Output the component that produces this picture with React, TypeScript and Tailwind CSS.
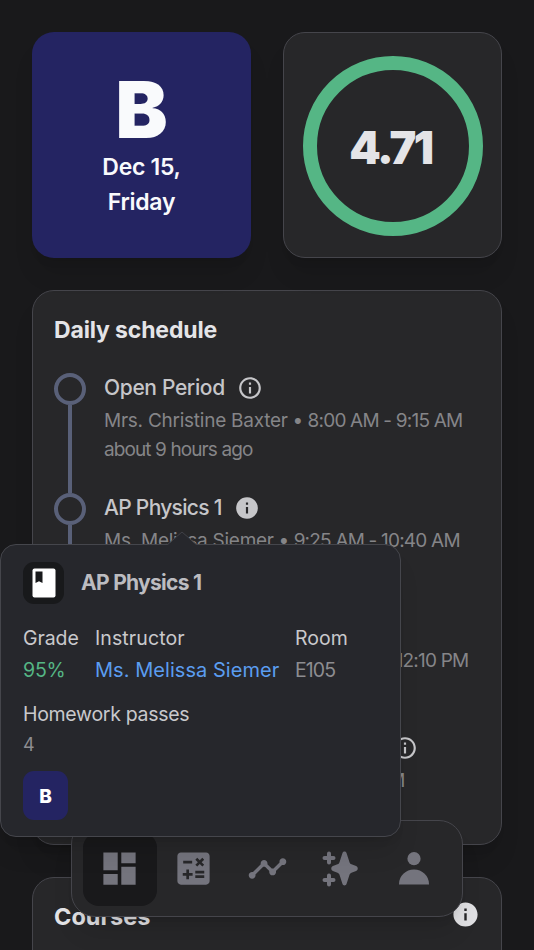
import React from 'react';
import { MdCalculate, MdDashboard, MdInfo, MdInfoOutline, MdTimeline } from 'react-icons/md';

interface Period {
    name: string;
    instructor: string;
    time: string;
    ago: string;
    active?: boolean;
    tracking: string;
}

const periods: Period[] = [
    { name: 'Open Period', instructor: 'Mrs. Christine Baxter', time: '8:00 AM - 9:15 AM', ago: 'about 9 hours ago', tracking: 'tracking-[-0.35px]' },
    { name: 'AP Physics 1', instructor: 'Ms. Melissa Siemer', time: '9:25 AM - 10:40 AM', ago: 'about 8 hours ago', active: true, tracking: 'tracking-[-0.7px]' },
    { name: 'English', instructor: 'Ms. Davida Harrison', time: '10:55 AM - 12:10 PM', ago: 'about 6 hours ago', tracking: 'tracking-[-0.35px]' },
    { name: 'Advanced Computer Science', instructor: 'Mr. Alan Reed', time: '12:50 PM - 2:01 PM', ago: 'about 4 hours ago', tracking: 'tracking-[-0.7px]' },
];

const BookIcon = () => (
    <svg className="w-[24px] h-[30px]" viewBox="0 0 24 30">
        <rect x="0.5" y="0.5" width="23" height="29" rx="2" fill="white" />
        <path d="M3.5 3.5h7v11.5l-3.5-1.7-3.5 1.7z" fill="#18191b" />
    </svg>
);

const SparkleIcon = () => (
    <svg className="w-[36px] h-[36px]" viewBox="0 0 36 36" fill="currentColor">
        <path d="M22.5 .5c1 0 1.800.7 2.100 1.700l3 9.200a3 3 0 0 0 1.900 1.900l4.600 1.700c2.200.900 2.200 4.100 0 5l-4.600 1.700a3 3 0 0 0-1.900 1.900l-3 9.200c-.7 2.300-3.500 2.300-4.200 0l-3-9.200a3 3 0 0 0-1.900-1.900l-4.600-1.700c-2.200-.9-2.200-4.100 0-5l4.600-1.700a3 3 0 0 0 1.900-1.900l3-9.200c.3-1 1.100-1.700 2.100-1.700z" />
        <path d="M7 2.500v9M2.500 7h9M7 24.500v9M2.500 29h9" stroke="currentColor" strokeWidth="4" strokeLinecap="round" />
    </svg>
);

const PersonIcon = () => (
    <svg className="w-[30px] h-[33px]" viewBox="0 0 30 33" fill="currentColor">
        <circle cx="15" cy="6.700" r="6.600" />
        <path d="M0 32.500V32a15 14.500 0 0 1 30 0v.5z" />
    </svg>
);

const ScheduleItem: React.FC<{ period: Period; last: boolean }> = ({ period, last }) => (
    <li className="flex h-[120px] shrink-0">
        <div className="flex w-8 flex-col items-center">
            <div className="h-8 w-8 shrink-0 rounded-full border-[4.500px] border-[#596078]" />
            {!last && <div className="w-[4px] grow bg-[#596078]" />}
        </div>
        <div className="ml-[18px] whitespace-nowrap">
            <div className="flex h-[29px] items-center gap-[12px]">
                <span className={`text-[21px] font-medium text-[#c6c6c9] ${period.tracking}`}>{period.name}</span>
                {period.active
                    ? <MdInfo className="h-[26px] w-[26px] text-[#c6c6c9]" />
                    : <MdInfoOutline className="h-[26px] w-[26px] text-[#c6c6c9]" />}
            </div>
            <p className="mt-[4px] text-[19px] leading-[29px] text-[#858588]">
                <span className="tracking-[-0.25px]">{period.instructor}</span>
                <span className="tracking-[-0.5px]"> • </span>
                <span className="tracking-[-0.8px]">{period.time}</span>
            </p>
            <p className="text-[19px] leading-[29px] text-[#858588] tracking-[-0.9px]">{period.ago}</p>
        </div>
    </li>
);

const CoursePopover = () => (
    <div className="absolute left-0 top-[544px] z-20 h-[293px] w-[401px] rounded-[16px] border border-[#45464c] bg-[#26272c] pl-[22px] pt-[17px] shadow-xl">
        <svg className="absolute left-[165px] top-[-14px] h-[16px] w-[32px]" viewBox="0 0 32 16">
            <path d="M1 14.500L16 1l15 13.500V16H1z" fill="#26272c" />
            <path d="M1 14L16 1l15 13" fill="none" stroke="#404147" />
        </svg>
        <div className="flex items-center">
            <div className="flex h-[42px] w-[41px] items-center justify-center rounded-[11px] bg-[#18191b]">
                <BookIcon />
            </div>
            <h3 className="ml-[17px] text-[21px] font-bold text-[#bcbcc0] tracking-[-0.7px]">AP Physics 1</h3>
        </div>
        <div className="mt-[18px] grid grid-cols-[72px_200px_auto] text-[19.500px] leading-[32px]">
            <span className="text-[#c9c9cc] tracking-[-0.1px]">Grade</span>
            <span className="text-[#c9c9cc] tracking-[0.1px]">Instructor</span>
            <span className="text-[#c9c9cc]">Room</span>
            <span className="text-[#55b685] tracking-[-0.2px]">95%</span>
            <span className="whitespace-nowrap text-[20px] text-[#5b9df0] tracking-[0.05px]">Ms. Melissa Siemer</span>
            <span className="text-[#8d8d91] tracking-[-0.9px]">E105</span>
        </div>
        <p className="mt-[13px] text-[19.500px] leading-[30px] text-[#c9c9cc] tracking-[-0.3px]">Homework passes</p>
        <p className="text-[18px] leading-[32px] text-[#8d8d91]">4</p>
        <div className="mt-[10px] flex h-[49px] w-[45px] items-center justify-center rounded-[11px] bg-[#242462] pt-[3px] text-[19px] font-extrabold text-white">
            B
        </div>
    </div>
);

const NavBar = () => (
    <nav className="absolute left-[71px] top-[820px] z-10 flex h-[97px] w-[392px] items-center rounded-[24px] border border-[#45454b] bg-[#272729] px-[11px] text-[#74747d] shadow-xl">
        <div className="flex h-[74px] w-[74px] items-center justify-center rounded-[16px] bg-[#19191b] pr-[1px]">
            <MdDashboard className="h-[43px] w-[43px]" />
        </div>
        <div className="flex w-[73px] justify-center"><MdCalculate className="h-[43px] w-[43px]" /></div>
        <div className="flex w-[74px] justify-center"><MdTimeline className="h-[41px] w-[41px]" /></div>
        <div className="flex w-[73px] justify-center pr-[2px]"><SparkleIcon /></div>
        <div className="flex w-[74px] justify-center"><PersonIcon /></div>
    </nav>
);

const App = () => {
    return (
        <main className="relative h-[950px] w-[534px] overflow-hidden bg-[#19191b] p-8 font-['Inter',sans-serif]">
            <div className="grid grid-cols-2 gap-8">
                <section className="flex h-[226px] flex-col items-center rounded-[22px] bg-[#242462] pt-[36px] text-[#f9fafc] shadow-xl">
                    <span className="pt-[2px] text-[78px] font-black leading-[80px]">B</span>
                    <p className="text-center text-[23px] font-semibold leading-[35px] tracking-[-0.3px]">Dec 15,<br />Friday</p>
                </section>
                <section className="flex h-[226px] items-center justify-center rounded-[22px] border border-[#45454b] bg-[#272729] pt-[1px] shadow-xl">
                    <div className="flex h-[180px] w-[180px] items-center justify-center rounded-full border-[14.500px] border-[#55b685] pr-[4px] pt-[4px] text-[45px] font-black text-[#e4e4e7] tracking-[-2.5px]">
                        4.71
                    </div>
                </section>
            </div>

            <section className="mt-8 h-[555px] overflow-hidden rounded-[22px] border border-[#45454b] bg-[#272729] px-[21px] pt-[22px] shadow-xl">
                <h2 className="text-[23px] font-bold leading-[34px] text-[#e4e4e7] tracking-[-0.15px]">Daily schedule</h2>
                <ul className="mt-[26px]">
                    {periods.map((period, i) => (
                        <ScheduleItem key={period.name} period={period} last={i === periods.length - 1} />
                    ))}
                </ul>
            </section>

            <section className="mt-8 flex h-[200px] items-start justify-between rounded-[22px] border border-[#45454b] bg-[#272729] px-[21px] pt-[22px]">
                <h2 className="text-[23.500px] font-bold leading-[34px] text-[#e4e4e7] tracking-[0px]">Courses</h2>
                <MdInfo className="h-[29px] w-[29px] text-[#e0e0e3]" />
            </section>

            <NavBar />
            <CoursePopover />
        </main>
    );
};

export default App;
